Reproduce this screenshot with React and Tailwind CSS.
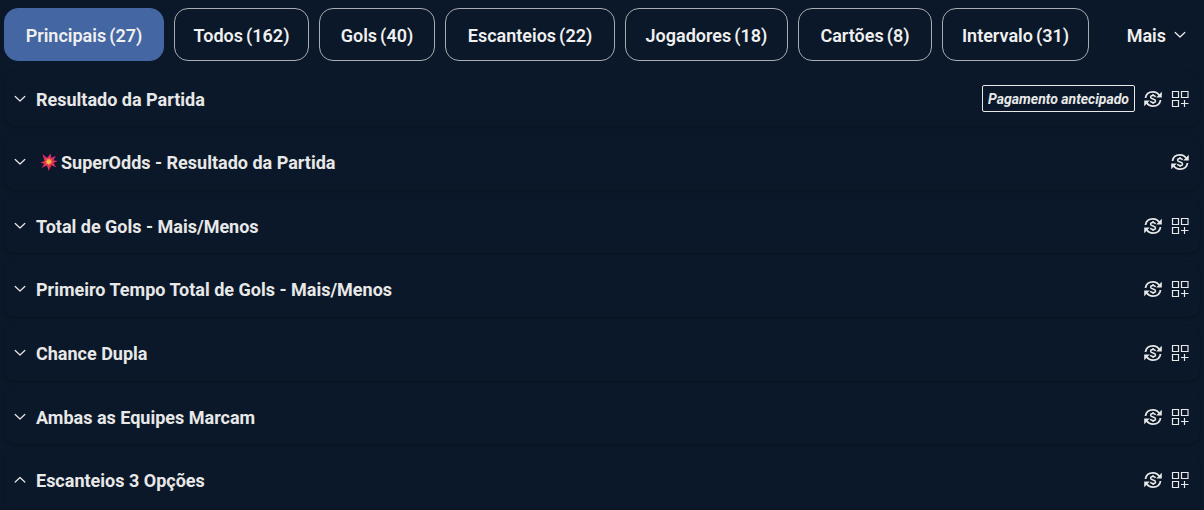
const tabs = [
  { label: 'Principais', count: 27, width: 'w-[160px]', active: true },
  { label: 'Todos', count: 162, width: 'w-[135px]' },
  { label: 'Gols', count: 40, width: 'w-[116px]' },
  { label: 'Escanteios', count: 22, width: 'w-[170px]' },
  { label: 'Jogadores', count: 18, width: 'w-[163px]' },
  { label: 'Cartões', count: 8, width: 'w-[134px]' },
  { label: 'Intervalo', count: 31, width: 'w-[147px]' },
];

const markets = [
  { title: 'Resultado da Partida', early: true, builder: true },
  { title: 'SuperOdds - Resultado da Partida', boost: true },
  { title: 'Total de Gols - Mais/Menos', builder: true },
  { title: 'Primeiro Tempo Total de Gols - Mais/Menos', builder: true },
  { title: 'Chance Dupla', builder: true },
  { title: 'Ambas as Equipes Marcam', builder: true },
  { title: 'Escanteios 3 Opções', builder: true, open: true },
];

function Chevron({ up }) {
  return (
    <svg viewBox="0 0 12 12" className="h-3 w-3 shrink-0" fill="none" stroke="currentColor" strokeWidth="1.2" strokeLinecap="round" strokeLinejoin="round" aria-hidden="true">
      <path d={up ? 'M1.200 8 6 3.500l4.800 4.500' : 'M1.200 3.500 6 8l4.800-4.500'} />
    </svg>
  );
}

function CashOutIcon() {
  return (
    <svg viewBox="0 0 18 18" className="h-[18px] w-[18px] shrink-0" fill="none" stroke="currentColor" aria-hidden="true">
      <path strokeWidth="1.8" d="M1.500 8C2 4.200 5 1.800 9 1.800c2.700 0 4.900 1.200 6.300 3.400M16.500 10c-.5 3.800-3.500 6.200-7.500 6.200-2.700 0-4.900-1.200-6.300-3.400" />
      <path fill="currentColor" stroke="none" d="M17.800 1.800v5.600h-5.600zM.2 16.200v-5.600h5.600z" />
      <path strokeWidth="1.500" d="M11.500 7C11.200 6 10.200 5.500 9 5.500c-1.400 0-2.400.6-2.400 1.700 0 2.500 4.900 1.200 4.900 3.700 0 1.100-1 1.700-2.500 1.700-1.400 0-2.300-.5-2.600-1.600M9 4v1.500M9 12.600v1.500" />
    </svg>
  );
}

function BuilderIcon() {
  return (
    <svg viewBox="0 0 18 18" className="h-[18px] w-[18px] shrink-0" fill="none" stroke="currentColor" strokeWidth="1.200" aria-hidden="true">
      <path d="M1.500 1.500h6v6h-6zM10.500 1.500h6.500v6h-6.500zM1.500 10.500h6v6h-6zM13.500 10v7M10 13.500h7.500" />
    </svg>
  );
}

function BurstIcon() {
  return (
    <svg viewBox="0 0 18 18" className="mb-0.5 h-[18px] w-[18px] shrink-0" aria-hidden="true">
      <path fill="#d42a6c" d="M2.500 1 7 4.800 10.800.6l.4 4.200 4.600-1.900-2.300 4.300 4.200.8-4 2 2.500 4.500-4.700-2.300L8.700 18l-1.800-5.600L1.600 15l2.400-4.300L.3 9.600l4.100-1.500z" />
      <path fill="#e8413f" d="m5 4.500 2.800 1.900L9.600 3.600l.7 2.900 3.200-1.500-1.600 2.700 3.300.5-3.200 1.400 2.200 3-3.700-1.600-1.600 5-1.400-4.700-3.500 1.700 1.800-3-3.300-.6 3.200-1.200z" />
      <path fill="#ffb840" d="m6.600 6 1.700.8.9-1.500.6 1.600 1.700-.4-.9 1.600 1.500.8-1.600.6.4 1.600-1.600-.6-.6 1.600-.9-1.500-1.800.6.900-1.600-1.500-.8 1.600-.8z" />
    </svg>
  );
}

function Market({ title, early, builder, boost, open }) {
  return (
    <section className={`flex h-[55px] items-center bg-[#0b1829] pr-[11px] pl-[10px] shadow-[0_1px_3px_rgba(0,0,0,0.25)] ${open ? 'rounded-t-xl' : 'rounded-xl'}`}>
      <h2 className="min-w-0 flex-1 text-lg leading-6 font-bold">
        <button type="button" aria-expanded={!!open} className="flex w-full items-center gap-[10px] text-left">
          <Chevron up={open} />
          <span className={`flex items-center gap-[3px] pt-0.5 ${boost ? 'pl-1' : ''}`}>
            {boost && <BurstIcon />}
            {title}
          </span>
        </button>
      </h2>
      <div className="flex items-center gap-[9px]">
        {early && (
          <span className="flex h-[27px] items-center rounded-xs border border-[#e8e8e8] px-[5px] text-sm font-bold whitespace-nowrap italic">
            Pagamento antecipado
          </span>
        )}
        <CashOutIcon />
        {builder && <BuilderIcon />}
      </div>
    </section>
  );
}

export default function App() {
  return (
    <div className="flex min-h-screen flex-col bg-[#0b1829] px-1 pt-2 font-[Roboto,sans-serif] text-[#e8e8e8]">
      <nav className="flex items-center gap-[10px] text-lg leading-6 font-semibold whitespace-nowrap text-[#f0f0f0]">
        {tabs.map((tab) => (
          <button
            key={tab.label}
            type="button"
            className={`flex h-[53px] shrink-0 items-center justify-center gap-[3px] rounded-[14px] border pt-0.5 ${tab.width} ${tab.active ? 'border-[#4466a3] bg-[#4466a3]' : 'border-[#a9adb3]'}`}
          >
            <span>{tab.label}</span> <span>({tab.count})</span>
          </button>
        ))}
        <button type="button" className="ml-auto flex items-center gap-2 pr-[14px]">
          <span className="pt-0.5">Mais</span>
          <Chevron />
        </button>
      </nav>
      <main className="flex flex-1 flex-col justify-between pt-[10px] pb-[2px]">
        {markets.map((market) => (
          <Market key={market.title} {...market} />
        ))}
      </main>
    </div>
  );
}
